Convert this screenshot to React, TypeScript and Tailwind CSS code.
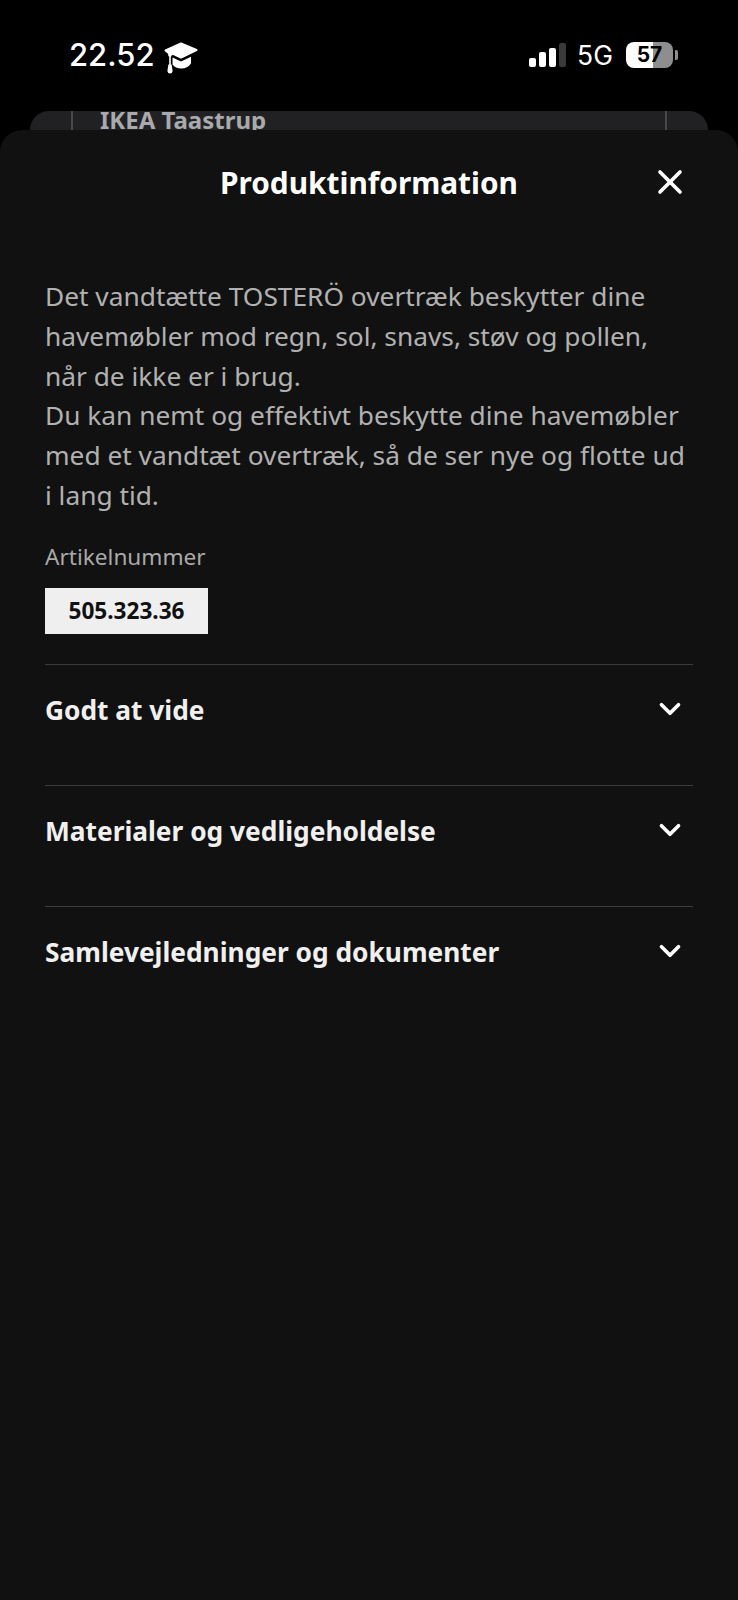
import { ChevronDown, X } from "lucide-react";

const sections = [
  "Godt at vide",
  "Materialer og vedligeholdelse",
  "Samlevejledninger og dokumenter",
];

const GraduationCap = () => (
  <svg width="34" height="32" viewBox="0 0 34 32" fill="white">
    <path
      d="M17 1.5 L32.5 8 L17 15.5 L9 11.8 L6.8 12.6 L6.8 13.6 L5.2 13.6 L5.2 11.4 L1.5 8.5 Z"
      stroke="white"
      strokeWidth="2"
      strokeLinejoin="round"
    />
    <path d="M8.5 15.5 L17 19.5 L27 14.8 L27 21.5 Q23.5 26.5 17 26.5 Q11.5 26.5 8.5 22.5 Z" />
    <rect x="5.2" y="13" width="1.6" height="10" />
    <path d="M4.4 22.5 h3.2 l1 6.5 q-0.4 2.5 -2.6 2.5 q-2.2 0 -2.6 -2.5 Z" />
  </svg>
);

const StatusBar = () => (
  <div className="h-[111px] flex justify-between pl-[69px] pr-[60px] pt-[37px] font-['Inter',sans-serif] text-white">
    <div className="flex items-start gap-[9px]">
      <span className="text-[31px] leading-[36px] font-medium">22.52</span>
      <div className="mt-[5px]">
        <GraduationCap />
      </div>
    </div>
    <div className="flex items-start">
      <div className="flex items-end gap-[3px] h-[24px] mt-[6px] mr-[11px]">
        <div className="w-[7px] h-[9px] rounded-[2px] bg-white" />
        <div className="w-[7px] h-[15px] rounded-[2px] bg-white" />
        <div className="w-[7px] h-[19px] rounded-[2px] bg-white" />
        <div className="w-[7px] h-[24px] rounded-[2px] bg-[#3a3a3a]" />
      </div>
      <span className="text-[26.5px] leading-[32px] mt-[2px] mr-[13px]">5G</span>
      <div className="flex items-center mt-[5px]">
        <div className="w-[47px] h-[26px] rounded-[8px] overflow-hidden flex items-center justify-center bg-[linear-gradient(90deg,#ffffff_57%,#8e8e8e_57%)] text-black text-[21px] font-bold">
          57
        </div>
        <div className="w-[3px] h-[10px] rounded-r-[2px] bg-[#8e8e8e] ml-[2px]" />
      </div>
    </div>
  </div>
);

export default function App() {
  return (
    <div className="h-[1600px] bg-black flex flex-col overflow-hidden font-['Noto_Sans',sans-serif]">
      <StatusBar />

      <div className="h-[19px] mx-[30px] rounded-t-[20px] bg-[#212124] overflow-hidden px-[41px]">
        <div className="h-[60px] border-x-2 border-[#48484a] pl-[27px] pr-2">
          <div className="text-[24px] leading-[18px] font-bold text-[#a9aaac] whitespace-nowrap">
            IKEA Taastrup
          </div>
        </div>
      </div>

      <div className="flex-1 rounded-t-[22px] bg-[#111111] px-[45px]">
        <div className="relative h-[106px] flex items-center justify-center">
          <h1 className="text-[29.8px] font-bold text-white">Produktinformation</h1>
          <X
            className="absolute right-[3px] top-[32px] text-white"
            size={40}
            strokeWidth={2.2}
          />
        </div>

        <p className="mt-[41px] text-[26.3px] leading-[39.8px] text-[#b1b1b1]">
          Det vandtætte TOSTERÖ overtræk beskytter dine havemøbler mod regn,
          sol, snavs, støv og pollen, når de ikke er i brug.
          <br />
          Du kan nemt og effektivt beskytte dine havemøbler med et vandtæt
          overtræk, så de ser nye og flotte ud i lang tid.
        </p>

        <div className="mt-[24px] text-[22.6px] leading-[34px] text-[#a9a9a9]">
          Artikelnummer
        </div>
        <div className="mt-[14px] w-[163px] h-[46px] bg-[#efefef] flex items-center justify-center text-[22.6px] font-bold text-[#111111]">
          505.323.36
        </div>

        <div className="mt-[30px]">
          {sections.map((s) => (
            <div
              key={s}
              className="h-[121px] border-t border-[#3c3c3c] pt-[25px] flex items-start justify-between"
            >
              <span className="text-[26.3px] leading-[40px] font-bold text-[#f0f0f0]">
                {s}
              </span>
              <ChevronDown
                className="text-white mr-[6px] mt-[2px]"
                size={34}
                strokeWidth={2.6}
              />
            </div>
          ))}
        </div>
      </div>
    </div>
  );
}
